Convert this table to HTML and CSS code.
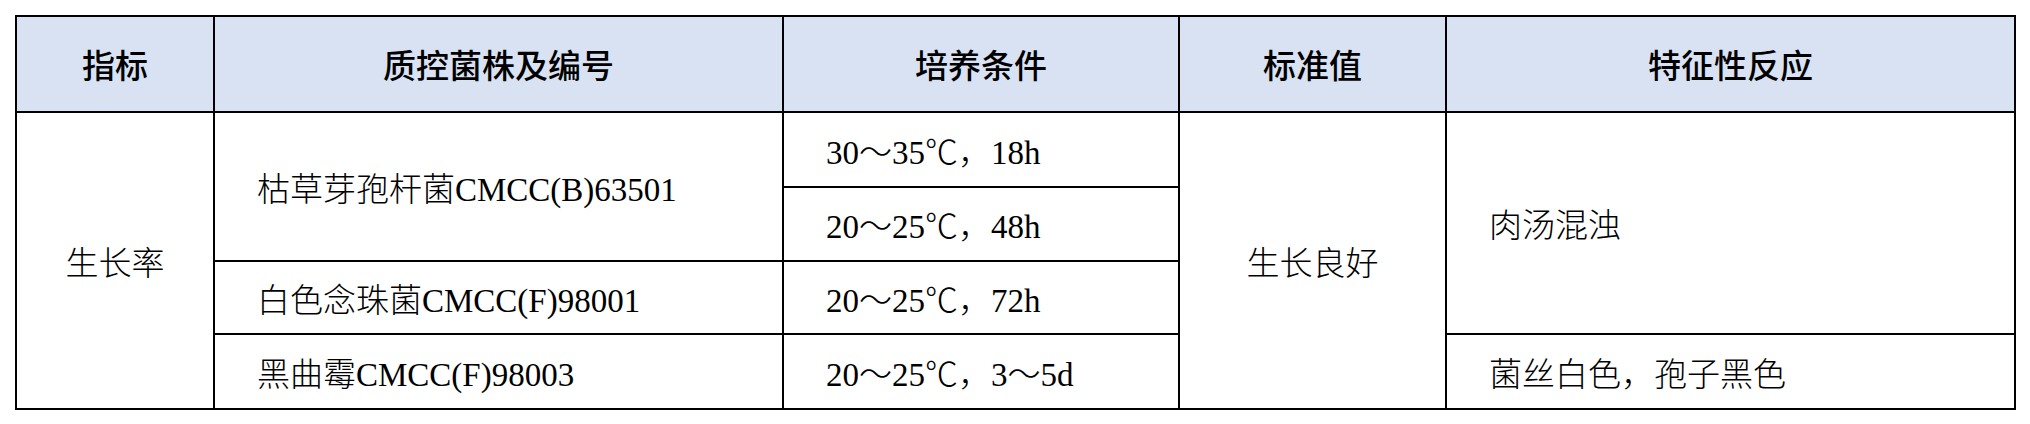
FILE: index.html
```html
<!DOCTYPE html>
<html lang="zh-CN">
<head>
<meta charset="utf-8">
<title>质控菌株</title>
<link rel="stylesheet" href="styles.css">
</head>
<body>
<div class="page">
  <table class="qc-table">
    <colgroup>
      <col class="c1">
      <col class="c2">
      <col class="c3">
      <col class="c4">
      <col class="c5">
    </colgroup>
    <thead>
      <tr class="head-row">
        <th>指标</th>
        <th>质控菌株及编号</th>
        <th>培养条件</th>
        <th>标准值</th>
        <th>特征性反应</th>
      </tr>
    </thead>
    <tbody>
      <tr class="r1">
        <td class="center" rowspan="4">生长率</td>
        <td class="left" rowspan="2">枯草芽孢杆菌CMCC(B)63501</td>
        <td class="left">30～35℃，18h</td>
        <td class="center" rowspan="4">生长良好</td>
        <td class="left" rowspan="3">肉汤混浊</td>
      </tr>
      <tr class="r2">
        <td class="left">20～25℃，48h</td>
      </tr>
      <tr class="r3">
        <td class="left">白色念珠菌CMCC(F)98001</td>
        <td class="left">20～25℃，72h</td>
      </tr>
      <tr class="r4">
        <td class="left">黑曲霉CMCC(F)98003</td>
        <td class="left">20～25℃，3～5d</td>
        <td class="left">菌丝白色，孢子黑色</td>
      </tr>
    </tbody>
  </table>
</div>
</body>
</html>
```
FILE: styles.css
```css
html, body {
  margin: 0;
  padding: 0;
  background: #ffffff;
}

.page {
  padding: 15px 0 0 15px;
}

.qc-table {
  border-collapse: collapse;
  table-layout: fixed;
  width: 1999px;
  font-family: "Liberation Serif", "Noto Sans CJK SC", serif;
  font-size: 33px;
  color: #000;
}

.c1 { width: 198px; }
.c2 { width: 569px; }
.c3 { width: 396px; }
.c4 { width: 267px; }
.c5 { width: 569px; }

.qc-table th,
.qc-table td {
  border: 2px solid #000;
  padding: 0;
  vertical-align: middle;
  white-space: nowrap;
}

.qc-table th {
  background: #d9e2f3;
  font-weight: 500;
  text-align: center;
}

.head-row { height: 96px; }
.r1 { height: 75px; }
.r2 { height: 74px; }
.r3 { height: 73px; }
.r4 { height: 75px; }

.qc-table td {
  font-weight: 300;
}

.center { text-align: center; }
.left { text-align: left; padding-left: 42px !important; }
```
